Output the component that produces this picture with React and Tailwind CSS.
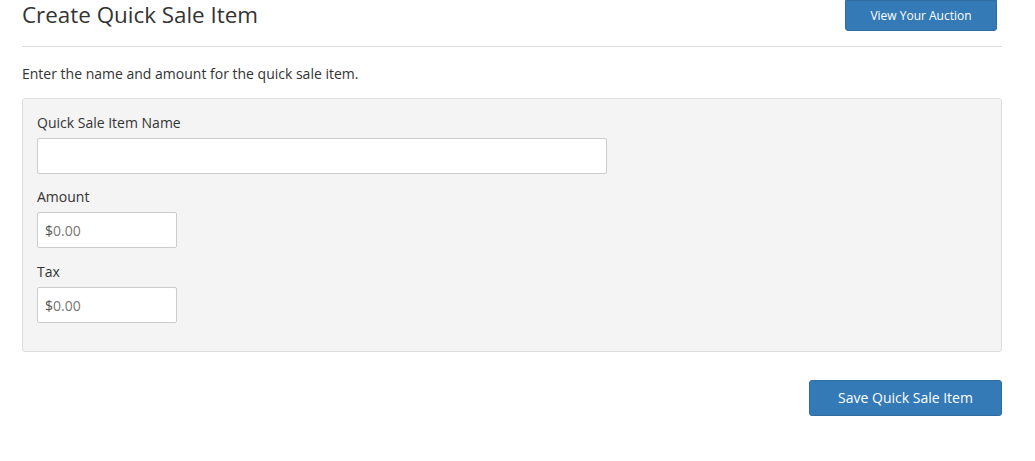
export default function App() {
  return (
    <div className="w-[1035px] h-[461px] bg-white text-[#333] overflow-hidden" style={{ fontFamily: '"Open Sans", sans-serif' }}>
      <div className="ml-[22px] w-[980px]">
        <div className="flex justify-between items-start h-[47px] border-b border-[#ddd]">
          <h1 className="text-[22.4px] leading-[26px] mt-[2px] text-[#333]">Create Quick Sale Item</h1>
          <button className="mr-[5px] w-[152px] h-[31px] bg-[#337ab7] text-white text-[12px] rounded-b-[3px] border border-[#2e6da4]">View Your Auction</button>
        </div>
        <p className="mt-[17px] text-[14px] leading-[20px]">Enter the name and amount for the quick sale item.</p>
        <div className="mt-[14px] h-[254px] bg-[#f4f4f4] border border-[#ddd] rounded-[3px] pl-[14px] pt-[14px]">
          <label className="block text-[14px] leading-[20px] mb-[5px]">Quick Sale Item Name</label>
          <input className="block w-[570px] h-[36px] bg-white border border-[#ccc] rounded-[2px]" />
          <label className="block mt-[13px] text-[14px] leading-[20px] mb-[5px]">Amount</label>
          <div className="flex items-center w-[140px] h-[36px] bg-white border border-[#ccc] rounded-[2px] pl-[7px] text-[14px]">
            <span className="text-[#555]">$</span><span className="text-[#777]">0.00</span>
          </div>
          <label className="block mt-[14px] text-[14px] leading-[20px] mb-[5px]">Tax</label>
          <div className="flex items-center w-[140px] h-[36px] bg-white border border-[#ccc] rounded-[2px] pl-[7px] text-[14px]">
            <span className="text-[#555]">$</span><span className="text-[#777]">0.00</span>
          </div>
        </div>
        <div className="flex justify-end mt-[28px]">
          <button className="w-[193px] h-[36px] pb-[2px] bg-[#337ab7] text-white text-[14px] rounded-[3px] border border-[#2e6da4]">Save Quick Sale Item</button>
        </div>
      </div>
    </div>
  );
}
